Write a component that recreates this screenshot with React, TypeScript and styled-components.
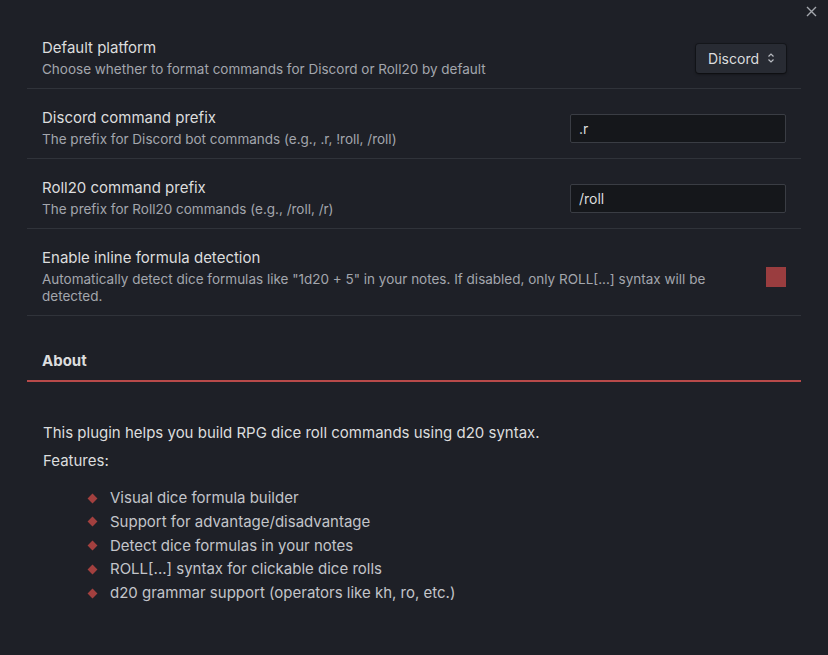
import React, { useState } from 'react';
import styled, { createGlobalStyle } from 'styled-components';

const GlobalStyle = createGlobalStyle`
  body {
    margin: 0;
    background: #1e2027;
    font-family: Inter, "Noto Sans", sans-serif;
    color: #dadada;
  }
`;

const Modal = styled.div`
  position: relative;
  width: 828px;
  height: 655px;
  background: #1e2027;
  box-sizing: border-box;
  padding: 19px 27px 0 27px;
  overflow: hidden;
`;

const CloseButton = styled.button`
  position: absolute;
  top: 3px;
  right: 9px;
  width: 16px;
  height: 16px;
  padding: 0;
  border: none;
  background: none;
  color: #a4a7ad;
  display: flex;
  align-items: center;
  justify-content: center;
  cursor: pointer;
`;

const Row = styled.div`
  display: flex;
  align-items: center;
  gap: 24px;
  padding: 19px 15px 10px 15px;
  border-bottom: 1px solid #30333a;
`;

const Info = styled.div`
  flex: 1;
  display: flex;
  flex-direction: column;
  gap: 3px;
`;

const Name = styled.div`
  font-size: 15px;
  color: #dcddde;
  line-height: 20px;
`;

const Description = styled.div`
  font-size: 13.5px;
  color: #a3a6ad;
  line-height: 17px;
`;

const Dropdown = styled.div`
  display: flex;
  align-items: center;
  gap: 8px;
  height: 29px;
  padding: 0 11px 0 12px;
  background: #282b33;
  border-radius: 3px;
  box-shadow: 0 1px 3px rgba(0, 0, 0, 0.55), 0 0 0 1px rgba(0, 0, 0, 0.25);
  font-size: 14px;
  color: #dcddde;
`;

const TextInput = styled.input`
  width: 216px;
  height: 29px;
  box-sizing: border-box;
  background: #15171b;
  border: 1px solid #3a3d44;
  border-radius: 2px;
  padding: 0 8px;
  font-family: Inter, sans-serif;
  font-size: 14px;
  color: #dcddde;
  outline: none;
`;

const Checkbox = styled.div<{ checked: boolean }>`
  width: 20px;
  height: 20px;
  background: ${(p) => (p.checked ? '#9a3d3f' : 'transparent')};
  border: ${(p) => (p.checked ? 'none' : '1px solid #555')};
  cursor: pointer;
`;

const Heading = styled.h3`
  margin: 35px 0 0 0;
  padding: 0 15px 9px 15px;
  font-size: 15px;
  font-weight: 700;
  line-height: 20px;
  color: #dcddde;
  border-bottom: 2px solid #b84a4a;
`;

const AboutBody = styled.div`
  padding: 41px 16px 0 16px;
  font-size: 15px;
  color: #dcddde;
`;

const Paragraph = styled.p`
  margin: 0 0 8px 0;
  line-height: 20px;
`;

const FeatureList = styled.ul`
  list-style: none;
  margin: 17px 0 0 0;
  padding: 0 0 0 46px;
  display: flex;
  flex-direction: column;
  gap: 3.75px;
`;

const Feature = styled.li`
  display: flex;
  align-items: center;
  gap: 14px;
  line-height: 20px;
  color: #c3c5ca;
`;

const Diamond = styled.span`
  width: 7px;
  height: 7px;
  background: #a3403f;
  transform: rotate(45deg);
  flex-shrink: 0;
`;

const features = [
  'Visual dice formula builder',
  'Support for advantage/disadvantage',
  'Detect dice formulas in your notes',
  'ROLL[...] syntax for clickable dice rolls',
  'd20 grammar support (operators like kh, ro, etc.)',
];

export default function App() {
  const [inline, setInline] = useState(true);

  return (
    <>
      <GlobalStyle />
      <Modal>
        <CloseButton aria-label="Close">
          <svg width="11" height="11" viewBox="0 0 11 11" stroke="currentColor" strokeWidth="1.4">
            <path d="M1 1L10 10M10 1L1 10" />
          </svg>
        </CloseButton>

        <Row>
          <Info>
            <Name>Default platform</Name>
            <Description>Choose whether to format commands for Discord or Roll20 by default</Description>
          </Info>
          <Dropdown>
            Discord
            <svg width="8" height="12" viewBox="0 0 8 12" fill="none" stroke="#b8bbc1" strokeWidth="1.2">
              <path d="M1.5 4.5L4 2L6.5 4.5M1.5 7.5L4 10L6.5 7.5" />
            </svg>
          </Dropdown>
        </Row>

        <Row>
          <Info>
            <Name>Discord command prefix</Name>
            <Description>The prefix for Discord bot commands (e.g., .r, !roll, /roll)</Description>
          </Info>
          <TextInput defaultValue=".r" />
        </Row>

        <Row>
          <Info>
            <Name>Roll20 command prefix</Name>
            <Description>The prefix for Roll20 commands (e.g., /roll, /r)</Description>
          </Info>
          <TextInput defaultValue="/roll" />
        </Row>

        <Row>
          <Info>
            <Name>Enable inline formula detection</Name>
            <Description>
              Automatically detect dice formulas like "1d20 + 5" in your notes. If disabled, only ROLL[...] syntax will be
              detected.
            </Description>
          </Info>
          <Checkbox checked={inline} onClick={() => setInline(!inline)} />
        </Row>

        <Heading>About</Heading>
        <AboutBody>
          <Paragraph>This plugin helps you build RPG dice roll commands using d20 syntax.</Paragraph>
          <Paragraph>Features:</Paragraph>
          <FeatureList>
            {features.map((f) => (
              <Feature key={f}>
                <Diamond />
                {f}
              </Feature>
            ))}
          </FeatureList>
        </AboutBody>
      </Modal>
    </>
  );
}
